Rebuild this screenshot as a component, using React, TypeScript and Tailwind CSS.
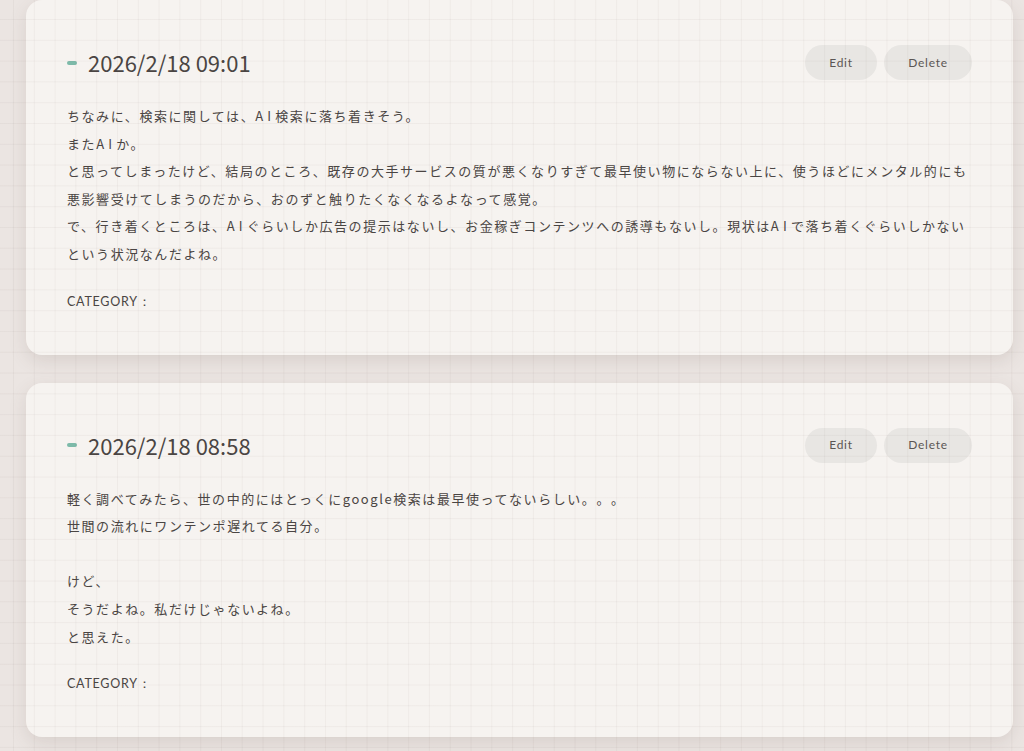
import { Fragment } from 'react';

const posts = [
  {
    date: '2026/2/18 09:01',
    body: `ちなみに、検索に関しては、AI検索に落ち着きそう。
またAIか。
と思ってしまったけど、結局のところ、既存の大手サービスの質が悪くなりすぎて最早使い物にならない上に、使うほどにメンタル的にも悪影響受けてしまうのだから、おのずと触りたくなくなるよなって感覚。
で、行き着くところは、AIぐらいしか広告の提示はないし、お金稼ぎコンテンツへの誘導もないし。現状はAIで落ち着くぐらいしかないという状況なんだよね。`,
  },
  {
    date: '2026/2/18 08:58',
    body: `軽く調べてみたら、世の中的にはとっくにgoogle検索は最早使ってないらしい。。。
世間の流れにワンテンポ遅れてる自分。

けど、
そうだよね。私だけじゃないよね。
と思えた。`,
  },
];

// the original font sets "AI" quite loosely
function Body({ text }: { text: string }) {
  const parts = text.split('AI');
  return (
    <>
      {parts.map((part, i) => (
        <Fragment key={i}>
          {part}
          {i < parts.length - 1 && <span className="tracking-[0.32em]">AI</span>}
        </Fragment>
      ))}
    </>
  );
}

function PostCard({ date, body }: { date: string; body: string }) {
  return (
    <article className="w-[987px] rounded-2xl bg-[#f6f3f0] px-[41px] pt-[45px] pb-[46px] shadow-[0_6px_18px_rgba(90,70,60,0.13)]">
      {/* Header */}
      <div className="flex items-center justify-between h-[35px]">
        <div className="flex items-center gap-[11px]">
          <span className="w-[10px] h-[4px] rounded-full bg-[#7dbaa9]" />
          <h2 className="font-['Noto_Sans_CJK_JP',sans-serif] text-[22px] leading-none text-[#4a4543] -mt-px">
            {date}
          </h2>
        </div>
        <div className="flex items-center gap-[7px]">
          <button className="h-[35px] w-[72px] rounded-full bg-[#e8e6e3] font-['Lato',sans-serif] text-[12px] tracking-[0.06em] text-[#5b5654]">
            Edit
          </button>
          <button className="h-[35px] w-[88px] rounded-full bg-[#e8e6e3] font-['Lato',sans-serif] text-[12px] tracking-[0.06em] text-[#5b5654]">
            Delete
          </button>
        </div>
      </div>

      {/* Body */}
      <p className="mt-[22px] whitespace-pre-line font-['Noto_Sans_CJK_JP',sans-serif] text-[13px] leading-[27.6px] tracking-[0.12em] text-[#4a4543] [text-spacing-trim:space-all]">
        <Body text={body} />
      </p>

      <p className="mt-[25px] mb-[-2px] font-['Lato',sans-serif] text-[12.5px] leading-[18px] tracking-[0.06em] text-[#4a4543]">
        CATEGORY：
      </p>
    </article>
  );
}

export default function App() {
  return (
    <div className="relative min-h-screen bg-[#ebe5e2] overflow-hidden">
      <main className="flex flex-col gap-[28px] pl-[26px] pb-10">
        {posts.map((p) => (
          <PostCard key={p.date} date={p.date} body={p.body} />
        ))}
      </main>
      {/* grid paper overlay */}
      <div className="pointer-events-none fixed inset-0 bg-[linear-gradient(to_right,rgba(90,60,50,0.045)_1px,transparent_1px),linear-gradient(to_bottom,rgba(90,60,50,0.045)_1px,transparent_1px)] bg-[size:20.8px_20.8px] bg-[position:13px_19px]" />
    </div>
  );
}
